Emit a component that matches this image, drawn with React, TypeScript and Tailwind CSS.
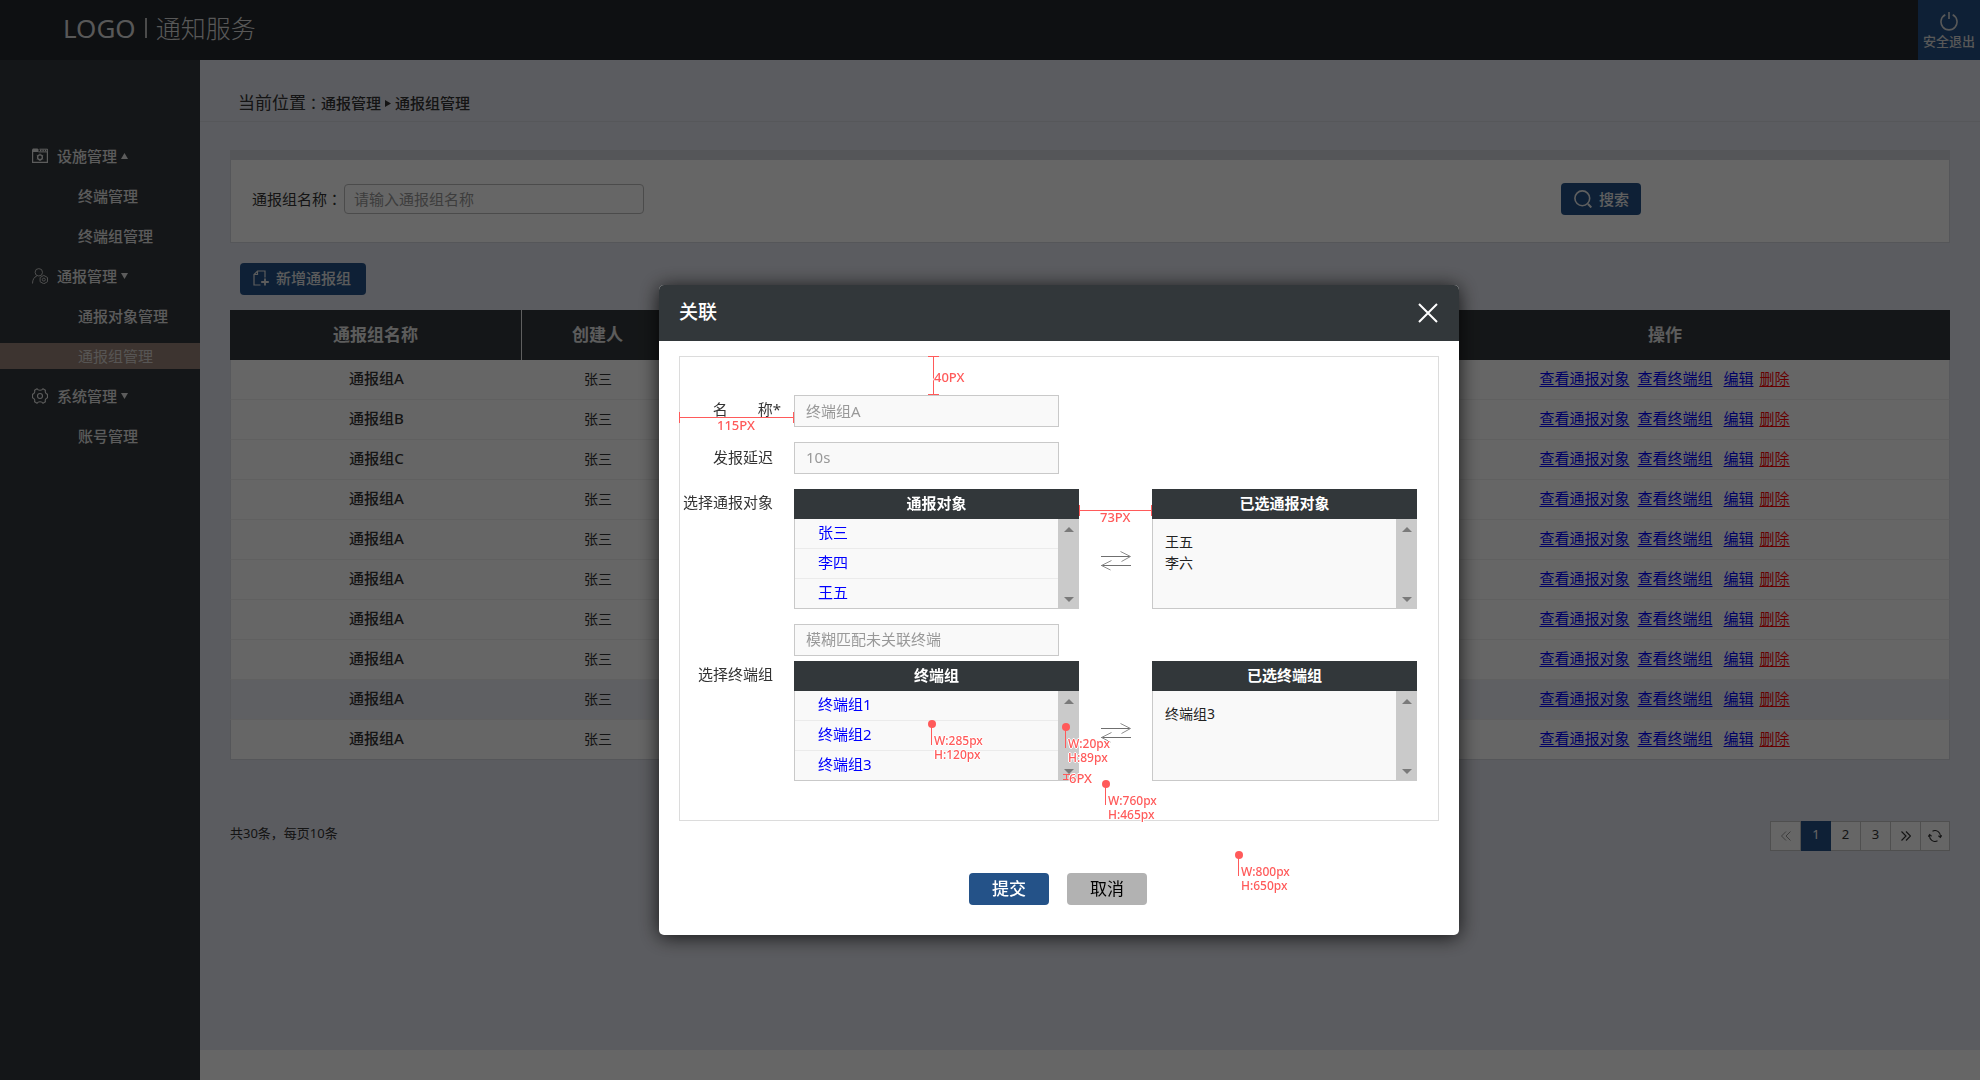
import React from 'react';

const sans = "font-['Noto_Sans','Noto_Sans_CJK_SC',sans-serif]";
const centredPunct = "font-['Noto_Sans_CJK_TC',sans-serif] font-normal";

function FacilityIcon() {
  return (
    <svg width="16" height="16" viewBox="0 0 16 16" fill="none" stroke="currentColor" aria-hidden="true">
      <path d="M0 1.500 1 .5h4.500l1 1V4H0z" fill="currentColor" stroke="none" />
      <path d="M6.500 3.900H16M15.400 1v3M7.500 1.200h8" />
      <path d="M8 2.500h7" strokeWidth="1.400" strokeDasharray="1.400 1" />
      <path d="M.6 4v10.400h14.800V4" strokeWidth="1.200" />
      <circle cx="8" cy="9.300" r="2.400" strokeWidth="1.400" />
      <path d="M8 5.600v1.200M8 11.800V13M4.800 7.400l1 .6M10.200 10.600l1 .6M11.200 7.400l-1 .6M5.800 10.600l-1 .6" />
    </svg>
  );
}

function UserIcon() {
  return (
    <svg width="17" height="16" viewBox="0 0 17 16" fill="none" stroke="currentColor" opacity="0.8" aria-hidden="true">
      <circle cx="6.800" cy="4.300" r="3.700" />
      <path d="M.5 15.500c.1-4 1.600-6.400 4.300-7.500" />
      <path d="M11.800 7.400l3.700 2.100v4.200l-3.700 2.100-3.700-2.100V9.500z" />
      <circle cx="11.800" cy="11.600" r="1.500" />
    </svg>
  );
}

function GearIcon() {
  return (
    <svg width="16" height="16" viewBox="0 0 16 16" fill="none" stroke="currentColor" strokeWidth="1.100" aria-hidden="true">
      <path d="M5 .8c.6 1 1.700 1.500 3 1.500s2.400-.5 3-1.500l2.400 1.500c-.5 1.700.3 3.600 2.100 4v3.400c-1.800.4-2.600 2.300-2.100 4L11 15.200c-.6-1-1.700-1.500-3-1.500s-2.400.5-3 1.500l-2.400-1.500c.5-1.700-.3-3.600-2.100-4V6.300c1.800-.4 2.600-2.300 2.100-4z" />
      <circle cx="8" cy="8" r="2.500" />
    </svg>
  );
}

function Caret({ up = false }: { up?: boolean }) {
  return (
    <svg width="7" height="6" viewBox="0 0 7 6" fill="currentColor" aria-hidden="true">
      {up ? <path d="M3.500 0 7 6H0z" /> : <path d="M0 0h7L3.500 6z" />}
    </svg>
  );
}

function MenuGroup({ icon, label, up, items, active }: { icon: React.ReactNode; label: string; up?: boolean; items: string[]; active?: string }) {
  return (
    <li>
      <button type="button" className="flex h-10 w-full items-center pl-8 text-[15px] leading-5 font-medium">
        <span className="w-[25px]">{icon}</span>
        {label}
        <span className="ml-1"><Caret up={up} /></span>
      </button>
      <ul>
        {items.map((item) => (
          <li key={item} className="flex h-10 items-center">
            <a
              href="#"
              className={
                item === active
                  ? 'block h-[26px] w-full bg-[#998378] pl-[78px] text-[15px] leading-[26px] text-[#dad5d2]'
                  : 'block h-[26px] w-full pl-[78px] text-[15px] leading-[26px] font-medium'
              }
            >
              {item}
            </a>
          </li>
        ))}
      </ul>
    </li>
  );
}

const groups = ['A', 'B', 'C', 'A', 'A', 'A', 'A', 'A', 'A', 'A'];

function ScrollRail() {
  return (
    <div className="flex w-[21px] shrink-0 flex-col items-center justify-between bg-[#cacaca] pt-2 pb-[7px] text-[#7a7a7a]">
      <svg width="10" height="5" viewBox="0 0 10 5" fill="currentColor" aria-hidden="true"><path d="M5 0l5 5H0z" /></svg>
      <svg width="10" height="5" viewBox="0 0 10 5" fill="currentColor" aria-hidden="true"><path d="M0 0h10L5 5z" /></svg>
    </div>
  );
}

function SwapIcon() {
  return (
    <svg width="30" height="20" viewBox="0 0 30 20" fill="none" stroke="#6f6f6f" aria-hidden="true">
      <path d="M0 5.500h29M0 14.500h30" />
      <path d="M19.500.5 29.500 5.500l-9 5M10.500 9.500.5 14.500l9 4.500" stroke="#8c8c8c" />
    </svg>
  );
}

const listTitle = 'h-[30px] bg-[#32373a] text-center text-[15px] leading-7 font-semibold text-white';

function Transfer({ label, title, options, pickedTitle, picked }: { label: string; title: string; options: string[]; pickedTitle: string; picked: string[] }) {
  return (
    <div className="flex" role="group" aria-label={label}>
      <span className="w-[114px] shrink-0 pr-[21px] text-right text-[15px] leading-[26px] text-[#333]">{label}</span>
      <section className="w-[285px] shrink-0">
        <h3 className={listTitle}>{title}</h3>
        <div className="flex h-[90px]">
          <ul className="flex-1 divide-y divide-[#ebebeb] border-b border-l border-[#c9c9c9] bg-[#f9f9f9]">
            {options.map((o) => (
              <li key={o} className="h-[30px] last:h-[29px]">
                <button type="button" className="block w-full pl-[23px] text-left text-[15px] leading-[26px] text-[#0000ff]">{o}</button>
              </li>
            ))}
          </ul>
          <ScrollRail />
        </div>
      </section>
      <div className="flex w-[73px] shrink-0 justify-center pt-[62px]">
        <button type="button" aria-label="交换" className="h-5"><SwapIcon /></button>
      </div>
      <section className="w-[265px] shrink-0">
        <h3 className={listTitle}>{pickedTitle}</h3>
        <div className="flex h-[90px]">
          <ul className="flex-1 border-b border-l border-[#c9c9c9] bg-[#f9f9f9] pt-3 pl-3 text-[14px] leading-[21px] text-[#222]">
            {picked.map((p) => <li key={p}>{p}</li>)}
          </ul>
          <ScrollRail />
        </div>
      </section>
    </div>
  );
}

const noteText = 'text-[#ff5a5a] font-medium [text-shadow:1px_0_0_#fff,-1px_0_0_#fff,0_1px_0_#fff,0_-1px_0_#fff]';

function SizeNote({ place, w, h }: { place: string; w: string; h: string }) {
  return (
    <div className={`absolute ${place} flex`}>
      <svg width="8" height="25" viewBox="0 0 8 25" aria-hidden="true">
        <circle cx="4" cy="4" r="4" fill="#ff5a5a" />
        <path d="M3.500 4v21" stroke="#ff5a5a" />
      </svg>
      <div className={`-ml-0.5 pt-3.5 text-[12px] leading-[14px] ${noteText}`}>
        <div>{w}</div>
        <div>{h}</div>
      </div>
    </div>
  );
}

function Notes() {
  return (
    <div className="pointer-events-none absolute inset-0">
      <div className="absolute top-[71px] left-[269px] h-[39px] w-[11px] border-y border-[#ff5a5a]">
        <div className="mx-auto h-full w-px bg-[#ff5a5a]" />
      </div>
      <span className={`absolute top-[85px] left-[275px] text-[13px] leading-[14px] ${noteText}`}>40PX</span>

      <div className="absolute top-[127px] left-5 flex h-[11px] w-[115px] items-center border-x border-[#ff5a5a]">
        <div className="h-px w-full bg-[#ff5a5a]" />
      </div>
      <span className={`absolute top-[133px] left-[58px] text-[13px] leading-[14px] ${noteText}`}>115PX</span>

      <div className="absolute top-[220px] left-[420px] flex h-[11px] w-[73px] items-center border-x border-[#ff5a5a]">
        <div className="h-px w-full bg-[#ff5a5a]" />
      </div>
      <span className={`absolute top-[225px] left-[441px] text-[13px] leading-[14px] ${noteText}`}>73PX</span>

      <div className="absolute top-[489px] left-[404px] h-[6px] w-[7px] border-y border-[#ff5a5a]">
        <div className="mx-auto h-full w-px bg-[#ff5a5a]" />
      </div>
      <span className={`absolute top-[486px] left-[410px] text-[13px] leading-[14px] ${noteText}`}>6PX</span>

      <SizeNote place="top-[435px] left-[269px]" w="W:285px" h="H:120px" />
      <SizeNote place="top-[438px] left-[403px]" w="W:20px" h="H:89px" />
      <SizeNote place="top-[495px] left-[443px]" w="W:760px" h="H:465px" />
      <SizeNote place="top-[566px] left-[576px]" w="W:800px" h="H:650px" />
    </div>
  );
}

const field = 'h-8 w-[265px] border border-[#c9c9c9] bg-[#f9f9f9] px-[11px] pb-0.5 text-[15px] text-[#999] placeholder:text-[#999] outline-none';

function AssociateDialog() {
  return (
    <div role="dialog" aria-modal="true" aria-labelledby="dialog-title" className="relative w-[800px] rounded-[5px] bg-white shadow-[0_2px_20px_rgba(0,0,0,0.8)]">
      <header className="flex h-14 items-center justify-between rounded-t-[5px] bg-[#32373a] px-5">
        <h2 id="dialog-title" className="pb-0.5 text-[19px] leading-7 font-medium text-white">关联</h2>
        <button type="button" aria-label="关闭" className="text-white">
          <svg width="21" height="20" viewBox="0 0 21 20" fill="none" stroke="currentColor" strokeWidth="2" aria-hidden="true">
            <path d="M1 1l18 18M19 1 1 19" />
          </svg>
        </button>
      </header>
      <form className="px-5 pt-[15px] pb-[30px]" onSubmit={(e) => e.preventDefault()}>
        <div className="flex flex-col border border-[#dcdcdc] pt-[38px] pb-[39px]">
          <div className="flex">
            <label htmlFor="name" className="w-[114px] pt-1.5 pr-[13px] text-right text-[15px] leading-4 text-[#333]">名　　称*</label>
            <input id="name" className={field} defaultValue="终端组A" />
          </div>
          <div className="mt-[15px] flex">
            <label htmlFor="delay" className="w-[114px] pr-[21px] text-right text-[15px] leading-[30px] text-[#333]">发报延迟</label>
            <input id="delay" className={field} defaultValue="10s" />
          </div>
          <div className="mt-[15px]">
            <Transfer label="选择通报对象" title="通报对象" options={['张三', '李四', '王五']} pickedTitle="已选通报对象" picked={['王五', '李六']} />
          </div>
          <input aria-label="模糊匹配未关联终端" className={`mt-[15px] mb-[5px] ml-[114px] ${field}`} placeholder="模糊匹配未关联终端" />
          <Transfer label="选择终端组" title="终端组" options={['终端组1', '终端组2', '终端组3']} pickedTitle="已选终端组" picked={['终端组3']} />
        </div>
        <div className="mt-[52px] flex justify-center gap-[18px] pr-0.5 text-[17px] leading-8">
          <button type="submit" className="h-8 w-20 rounded-[4px] bg-[#245288] font-medium text-white">提交</button>
          <button type="button" className="h-8 w-20 rounded-[4px] bg-[#b2b2b2] text-black">取消</button>
        </div>
      </form>
      <Notes />
    </div>
  );
}

export default function App() {
  const th = 'h-[50px] p-0 text-center text-[17px] font-semibold';
  const page = 'flex h-[30px] w-[30px] items-center justify-center border-r border-[#c6c6c6] last:w-[28px] last:border-r-0';
  return (
    <div className={`flex min-h-screen flex-col text-[#333] ${sans}`}>
      <header className="flex h-[60px] shrink-0 justify-between bg-[#23282d] text-[#ddd]">
        <div className="flex items-center pb-1 pl-[63px]">
          <span className="text-[26px] leading-9">LOGO</span>
          <span className="ml-[9px] h-5 w-0.5 bg-[#bbb]" />
          <span className="ml-[9px] text-[25px] leading-9 font-light">通知服务</span>
        </div>
        <button type="button" className="flex w-[62px] flex-col items-center bg-[#245288] pt-3">
          <svg width="18" height="19" viewBox="0 0 18 19" fill="none" stroke="currentColor" strokeWidth="1.600" aria-hidden="true">
            <path d="M5.300 2.800a8 8 0 1 0 7.400 0M9 0v7" />
          </svg>
          <span className="text-[13px] leading-5 font-medium whitespace-nowrap">安全退出</span>
        </button>
      </header>

      <div className="flex flex-1">
        <nav className="w-[200px] shrink-0 bg-[#34393c] pt-[76px] text-[#e6e6e6]">
          <ul>
            <MenuGroup icon={<FacilityIcon />} label="设施管理" up items={['终端管理', '终端组管理']} />
            <MenuGroup icon={<UserIcon />} label="通报管理" items={['通报对象管理', '通报组管理']} active="通报组管理" />
            <MenuGroup icon={<GearIcon />} label="系统管理" items={['账号管理']} />
          </ul>
        </nav>

        <div className="flex min-w-0 flex-1 flex-col">
          <main className="flex-1 bg-[#e4e6ef]">
            <div className="flex h-[62px] items-center border-b border-[#d7d9e1] pt-[25px] pl-[38px] text-[15px] leading-6">
              <span className="text-[17px]">当前位置</span>
              <span className={`text-[15px] ${centredPunct}`}>：</span>
              <a href="#" className="font-medium">通报管理</a>
              <svg width="6" height="7" viewBox="0 0 6 7" className="mx-1" fill="currentColor" aria-hidden="true"><path d="M0 0l6 3.500L0 7z" /></svg>
              <a href="#" className="font-medium">通报组管理</a>
            </div>

            <div className="px-[30px] pt-7">
              <div className="border border-t-[10px] border-[#d4d6de] bg-white">
                <form className="flex h-[82px] items-center pb-1 pl-[21px] text-[15px]" onSubmit={(e) => e.preventDefault()}>
                  <label htmlFor="group" className="w-[92px] whitespace-nowrap">
                    通报组名称<span className={centredPunct}>：</span>
                  </label>
                  <input id="group" placeholder="请输入通报组名称" className="h-[30px] w-[300px] rounded-[4px] border border-[#bbb] bg-white px-[9px] placeholder:text-[#999]" />
                  <button type="submit" className="mr-[308px] ml-auto flex h-8 w-20 items-center rounded-[4px] bg-[#245288] pl-[13px] text-[#eee]">
                    <svg width="18" height="18" viewBox="0 0 18 18" fill="none" stroke="currentColor" strokeWidth="1.600" aria-hidden="true">
                      <circle cx="8.300" cy="8.300" r="7.400" />
                      <path d="M14 14l3.300 3.500" strokeWidth="2" />
                    </svg>
                    <span className="ml-[7px] font-medium">搜索</span>
                  </button>
                </form>
              </div>

              <button type="button" className="mt-5 ml-2.5 flex h-8 w-[126px] items-center rounded-[4px] bg-[#245288] pb-0.5 pl-[13px] text-[15px] text-[#e6e6e6]">
                <svg width="16" height="16" viewBox="0 0 16 16" fill="none" stroke="currentColor" strokeWidth="1.200" aria-hidden="true">
                  <path d="M7.500 15H1V4.500L4.500 1H12v6.500M1 4.500h3.500V1" />
                  <path d="M12 8.500v7M8.200 12h7.600" strokeWidth="1.800" />
                </svg>
                <span className="ml-[7px] font-medium">新增通报组</span>
              </button>

              <table className="mt-[15px] w-full table-fixed border-separate border-spacing-0 bg-white">
                <colgroup>
                  <col className="w-[292px]" />
                  <col className="w-[152px]" />
                  <col />
                  <col className="w-[570px]" />
                </colgroup>
                <thead className="bg-[#34393c] text-[#e6e6e6]">
                  <tr>
                    <th className={`${th} border-r border-[#eee]`}>通报组名称</th>
                    <th className={`${th} border-r border-[#eee]`}>创建人</th>
                    <th className={th}></th>
                    <th className={th}>操作</th>
                  </tr>
                </thead>
                <tbody className="text-[15px] [&_td]:h-10 [&_td]:border-b [&_td]:border-[#f1f1f1] [&_td]:p-0 [&_td]:pb-0.5 [&_td]:text-center [&_tr:last-child_td]:border-[#d4d6de] [&_td:first-child]:border-l [&_td:first-child]:border-l-[#dcdee6] [&_td:last-child]:border-r [&_td:last-child]:border-r-[#dcdee6]">
                  {groups.map((g, i) => (
                    <tr key={i} className={i === 8 ? 'bg-[#eef0f7]' : ''}>
                      <td className="font-medium">通报组{g}</td>
                      <td className="text-[14px]">张三</td>
                      <td></td>
                      <td className="whitespace-nowrap text-[#0000ff] underline underline-offset-2">
                        <div className="flex justify-center">
                          <a href="#" className="mr-2">查看通报对象</a>
                          <a href="#" className="mr-[11px]">查看终端组</a>
                          <a href="#" className="mr-1.5">编辑</a>
                          <a href="#" className="text-[#ff0000] underline">删除</a>
                        </div>
                      </td>
                    </tr>
                  ))}
                </tbody>
              </table>

              <div className="mt-[61px] flex items-center justify-between text-[13px]">
                <p className="pb-1">共30条，每页10条</p>
                <nav aria-label="分页" className="flex h-[30px] items-center border border-[#c6c6c6] bg-white text-[13px] text-[#333]">
                  <button type="button" aria-label="上一页" className={page}>
                    <svg width="10" height="10" viewBox="0 0 10 10" fill="none" stroke="#999" aria-hidden="true"><path d="M5 .5.500 5 5 9.500M9.500.5 5 5l4.500 4.500" /></svg>
                  </button>
                  <button type="button" className="h-[30px] w-[30px] bg-[#245288] pb-0.5 text-white">1</button>
                  <button type="button" className={`${page} pb-0.5`}>2</button>
                  <button type="button" className={`${page} pb-0.5`}>3</button>
                  <button type="button" aria-label="下一页" className={page}>
                    <svg width="10" height="10" viewBox="0 0 10 10" fill="none" stroke="#333" strokeWidth="1.200" aria-hidden="true"><path d="M5 .5 9.500 5 5 9.500M.5.500 5 5 .5 9.500" /></svg>
                  </button>
                  <button type="button" aria-label="刷新" className={page}>
                    <svg width="14" height="12" viewBox="0 0 14 12" fill="none" stroke="#333" strokeWidth="1.100" aria-hidden="true">
                      <path d="M4.500 1.200A5.400 5.400 0 0 1 12.300 7M9.500 10.800A5.400 5.400 0 0 1 1.700 5" />
                      <path d="M10.400 5.800l2 1.600 1.400-2M3.600 6.200l-2-1.600L.2 6.600" />
                    </svg>
                  </button>
                </nav>
              </div>
            </div>
          </main>
          <footer className="h-[30px] bg-white" />
        </div>
      </div>

      <div className="fixed inset-0 flex items-start justify-center overflow-auto bg-black/60 pt-[285px] pl-[138px]">
        <AssociateDialog />
      </div>
    </div>
  );
}
